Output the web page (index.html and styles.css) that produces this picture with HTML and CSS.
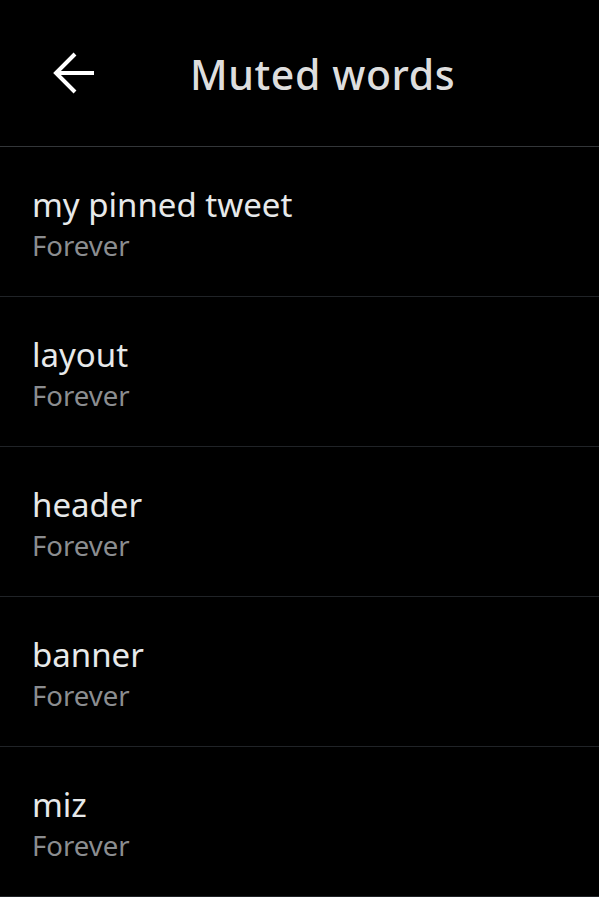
FILE: index.html
```html
<!DOCTYPE html>
<html lang="en">
<head>
    <meta charset="UTF-8">
    <meta name="viewport" content="width=device-width, initial-scale=1.0">
    <title>Muted words</title>
    <link rel="stylesheet" href="styles.css">
</head>
<body>
    <header class="top-bar">
        <a href="javascript:;" class="back-btn" title="Back">
            <svg viewBox="0 0 42 42" width="42" height="42" fill="none" stroke="#fff" stroke-width="4" stroke-linecap="butt">
                <path d="M3 21 H41"/>
                <path d="M22 2 L3 21 L22 40"/>
            </svg>
        </a>
        <h1 class="title">Muted words</h1>
    </header>

    <ul class="word-list">
        <li class="word-item"><p class="word">my pinned tweet</p><p class="duration">Forever</p></li>
        <li class="word-item"><p class="word">layout</p><p class="duration">Forever</p></li>
        <li class="word-item"><p class="word">header</p><p class="duration">Forever</p></li>
        <li class="word-item"><p class="word">banner</p><p class="duration">Forever</p></li>
        <li class="word-item"><p class="word">miz</p><p class="duration">Forever</p></li>
    </ul>
</body>
</html>
```

FILE: styles.css
```css
*{padding:0px;margin:0px;box-sizing:border-box;}

ul, li{list-style:none;}

a{text-decoration:none;color:#fff;}

body{
    background:#000;
    font-family:"Noto Sans", "Open Sans", sans-serif;
    color:#e7e9ea;
}

.top-bar{
    height:147px;
    display:flex;
    align-items:center;
    padding-left:53px;
    border-bottom:1px solid #333639;
}
.back-btn{
    display:flex;
    width:42px;height:42px;
}
.title{
    margin-left:95px;
    font-size:41px;
    font-weight:500;
    color:#dedede;
    letter-spacing:0.6px;
    padding-top:2px;
}

.word-item{
    height:150px;
    display:flex;
    flex-direction:column;
    justify-content:center;
    padding-left:32px;
    padding-top:6px;
    border-bottom:1px solid #202327;
}
.word{
    font-size:33px;
    line-height:42px;
    color:#e7e9ea;
}
.duration{
    font-size:27.5px;
    line-height:40px;
    color:#8b8d90;
}
```
